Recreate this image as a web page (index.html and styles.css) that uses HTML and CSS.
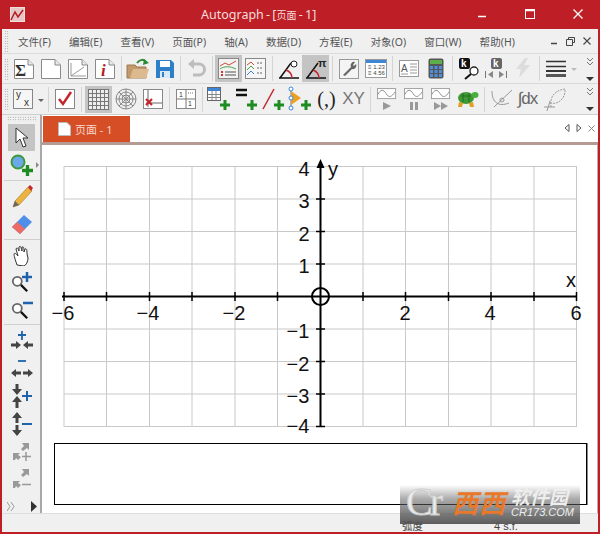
FILE: index.html
```html
<!DOCTYPE html>
<html lang="zh">
<head>
<meta charset="utf-8">
<title>Autograph</title>
<link rel="stylesheet" href="styles.css">
</head>
<body>
<svg class="defs" width="0" height="0">
  <defs>
    <symbol id="page" viewBox="0 0 22 22"><path d="M1.5 1.5H15L20.500 7V20.500H1.500Z" fill="#fff" stroke="#8a8a8a"/><path d="M15 1.500V7H20.500" fill="#e8e8e8" stroke="#8a8a8a"/></symbol>
    <symbol id="plus" viewBox="0 0 10 10"><path d="M5 0V10M0 5H10" stroke="#1d8a22" stroke-width="3"/></symbol>
    <symbol id="wave" viewBox="0 0 22 14"><rect x=".5" y=".5" width="20" height="11" fill="#fff" stroke="#9a9a9a"/><path d="M1 7C4 1 7 1 10 6S16 10 20 4" fill="none" stroke="#8a8a8a"/></symbol>
    <symbol id="mag" viewBox="0 0 20 20"><circle cx="7" cy="7" r="5" fill="#fff" stroke="#666" stroke-width="2"/><path d="M11 11L18 18" stroke="#111" stroke-width="2.500"/></symbol>
    <symbol id="chev" viewBox="0 0 10 26"><path d="M2 2L5 5L8 2M2 6L5 9L8 6" fill="none" stroke="#777"/><path d="M1 21H9L5 25Z" fill="#333"/></symbol>
    <symbol id="arr" viewBox="0 0 10 10"><path d="M0 5L5 1V3.500H10V6.500H5V9Z" fill="#444"/></symbol>
  </defs>
</svg>

<header class="titlebar">
  <svg class="app-icon" width="15" height="15" viewBox="0 0 15 15"><rect x=".5" y=".5" width="14" height="14" fill="#e8c6c6" stroke="#f3dddd"/><path d="M1 13L5 5L8 10L13 3" fill="none" stroke="#b01c22" stroke-width="1.500"/></svg>
  <div class="title">Autograph - [<span class="title-cn">页面</span> - 1]</div>
  <div class="win-btns">
    <svg width="10" height="10" viewBox="0 0 10 10"><path d="M1 7.500H9" stroke="#fff" stroke-width="1.500"/></svg>
    <svg width="10" height="10" viewBox="0 0 10 10"><rect x=".5" y=".5" width="9" height="9" fill="none" stroke="#fff"/><path d="M0 1.500H10" stroke="#fff" stroke-width="1.500"/></svg>
    <svg width="10" height="10" viewBox="0 0 10 10"><path d="M.5 .5L9.500 9.500M9.500 .5L.5 9.500" stroke="#fff" stroke-width="1.300"/></svg>
  </div>
</header>

<div class="shell">
<nav class="menubar">
  <i class="grip"></i>
  <span>文件(F)</span><span>编辑(E)</span><span>查看(V)</span><span>页面(P)</span><span>轴(A)</span><span>数据(D)</span><span>方程(E)</span><span>对象(O)</span><span>窗口(W)</span><span>帮助(H)</span>
  <div class="mdi">
    <svg width="8" height="8" viewBox="0 0 8 8"><path d="M1 6.500H7" stroke="#444" stroke-width="1.500"/></svg>
    <svg width="9" height="9" viewBox="0 0 9 9"><path d="M2.500 2.500V.5H8.500V5.500H6.500M.5 2.500H6.500V8.500H.5Z" fill="none" stroke="#444"/></svg>
    <svg width="8" height="8" viewBox="0 0 8 8"><path d="M.5 .5L7.500 7.500M7.500 .5L.5 7.500" stroke="#444" stroke-width="1.100"/></svg>
  </div>
</nav>

<div class="toolbar">
  <i class="grip"></i>
  <b class="tb"><svg width="22" height="22"><use href="#page"/><text x="2" y="18" class="ic-serif">Σ</text></svg></b>
  <b class="tb"><svg width="22" height="22"><use href="#page"/></svg></b>
  <b class="tb"><svg width="22" height="22"><use href="#page"/><path d="M4 18L17 9M4 5V18H19" fill="none" stroke="#999"/></svg></b>
  <b class="tb"><svg width="22" height="22"><use href="#page"/><text x="7" y="18" class="ic-i">i</text></svg></b>
  <u class="sep"></u>
  <b class="tb"><svg width="24" height="22" viewBox="0 0 24 22"><path d="M1 7H9L11 9H20V20H1Z" fill="#c49a6c" stroke="#9a7a52"/><path d="M4 20L7 11H23L20 20Z" fill="#dcb98e"/><path d="M11 5C14 1 18 1 20 4" fill="none" stroke="#2a8a34" stroke-width="2"/><path d="M18 1L23 5L17 7Z" fill="#2a8a34"/></svg></b>
  <b class="tb"><svg width="20" height="20" viewBox="0 0 20 20"><path d="M1 1H16L19 4V19H1Z" fill="#2d7fc9"/><rect x="5" y="2" width="10" height="6" fill="#fff"/><rect x="5" y="12" width="10" height="7" fill="#d8e8f6"/><rect x="7" y="13" width="2" height="5" fill="#2d7fc9"/></svg></b>
  <u class="sep tight"></u>
  <b class="tb"><svg width="20" height="20" viewBox="0 0 20 20"><path d="M3 5H12A5.500 5.500 0 0 1 12 16H6" fill="none" stroke="#bdbdbd" stroke-width="3"/><path d="M7 0V10L1 5Z" fill="#bdbdbd"/></svg></b>
  <u class="sep tight"></u>
  <b class="tb on"><svg width="21" height="21" viewBox="0 0 21 21"><rect x=".5" y=".5" width="20" height="20" fill="#f2f2f2" stroke="#888"/><path d="M2 8L7 5L11 7L18 3" fill="none" stroke="#d24a3a"/><path d="M2 11C6 8 12 8 18 11" fill="none" stroke="#4aa04a"/><path d="M3 14H5M3 17H5" stroke="#c33" stroke-width="2"/><path d="M7 14H18M7 17H18" stroke="#555"/></svg></b>
  <b class="tb"><svg width="21" height="21" viewBox="0 0 21 21"><rect x=".5" y=".5" width="20" height="20" fill="#f6f6f6" stroke="#888"/><path d="M2 7L6 4L9 7" fill="none" stroke="#d24a3a"/><path d="M2 12L6 8L9 11" fill="none" stroke="#4aa04a"/><path d="M2 17L6 13L9 16" fill="none" stroke="#3d7fd0"/><path d="M12 5H18M12 10H18M12 15H18" stroke="#666" stroke-dasharray="2 1"/></svg></b>
  <u class="sep"></u>
  <b class="tb"><svg width="22" height="22" viewBox="0 0 22 22"><path d="M1 20H21M2 20L13 5" fill="none" stroke="#111" stroke-width="1.500"/><path d="M8 12A9 9 0 0 1 14 20" fill="none" stroke="#c4262e" stroke-width="1.500"/><circle cx="16" cy="6" r="3" fill="#fff" stroke="#222"/></svg></b>
  <b class="tb on"><svg width="22" height="22" viewBox="0 0 22 22"><path d="M1 20H21M2 20L13 5" fill="none" stroke="#111" stroke-width="1.500"/><path d="M8 12A9 9 0 0 1 14 20" fill="none" stroke="#c4262e" stroke-width="1.500"/><text x="13" y="9" class="ic-pi">π</text></svg></b>
  <u class="sep"></u>
  <b class="tb"><svg width="20" height="20" viewBox="0 0 20 20"><rect x=".5" y=".5" width="19" height="19" fill="#f4f4f4" stroke="#999"/><path d="M4 16L12 8A3.500 3.500 0 0 1 16 3L14 6L15 7L17 5A3.500 3.500 0 0 1 13 10L6 17Z" fill="#666"/></svg></b>
  <b class="tb"><svg width="22" height="19" viewBox="0 0 22 19"><rect x=".5" y=".5" width="21" height="18" fill="#fff" stroke="#999"/><rect x="1" y="1" width="20" height="3" fill="#3d86d6"/><text x="3" y="10" class="ic-tiny">≡ 1.23</text><text x="3" y="16" class="ic-tiny">≡ 4.56</text></svg></b>
  <u class="sep"></u>
  <b class="tb"><svg width="20" height="17" viewBox="0 0 20 17"><rect x=".5" y=".5" width="19" height="16" fill="#fff" stroke="#999"/><text x="2" y="12" class="ic-a">A</text><path d="M11 4H18M11 7H18M11 10H18M11 13H18M2 14H9" stroke="#999"/></svg></b>
  <b class="tb"><svg width="16" height="21" viewBox="0 0 16 21"><rect x=".5" y=".5" width="15" height="20" rx="2" fill="#555"/><rect x="2" y="2" width="12" height="4" fill="#5bb04b"/><path d="M2 8H5V11H2ZM6.500 8H9.500V11H6.500ZM11 8H14V11H11ZM2 12H5V15H2ZM6.500 12H9.500V15H6.500ZM11 12H14V15H11ZM2 16H5V19H2ZM6.500 16H9.500V19H6.500ZM11 16H14V19H11Z" fill="#4f8edb"/></svg></b>
  <u class="sep"></u>
  <b class="tb"><svg width="22" height="22" viewBox="0 0 22 22"><rect x="1" y="0" width="11" height="11" rx="2" fill="#111"/><text x="3" y="9" class="ic-k">k</text><circle cx="16" cy="13" r="4" fill="#fff" stroke="#222" stroke-width="1.300"/><path d="M13 16L7 21" stroke="#111" stroke-width="2"/></svg></b>
  <b class="tb"><svg width="22" height="21" viewBox="0 0 22 21"><rect x="6" y="0" width="11" height="11" rx="2" fill="#666"/><text x="8" y="9" class="ic-k">k</text><path d="M.5 13V20M21.500 13V20" stroke="#777"/><path d="M3 16.500L8 13V20ZM19 16.500L14 13V20Z" fill="#888"/></svg></b>
  <b class="tb"><svg width="16" height="21" viewBox="0 0 16 21"><path d="M10 0L1 11H6L4 20L15 7H9L13 0Z" fill="#dcdcdc"/></svg></b>
  <u class="sep"></u>
  <b class="tb"><svg width="20" height="17" viewBox="0 0 20 17"><path d="M0 1.500H20M0 6.500H20" stroke="#333" stroke-width="1.500"/><path d="M0 11H20" stroke="#333" stroke-width="2"/><path d="M0 15.500H20" stroke="#555" stroke-width="3"/></svg></b>
  <b class="drop gray"></b>
  <svg class="chev" width="10" height="26"><use href="#chev"/></svg>
</div>

<div class="toolbar second">
  <i class="grip"></i>
  <b class="tb narrow"><svg width="20" height="20" viewBox="0 0 20 20"><rect x=".5" y=".5" width="19" height="19" fill="#f6f6f6" stroke="#888"/><text x="3" y="9" class="ic-yx">y</text><text x="11" y="17" class="ic-yx">x</text></svg></b>
  <b class="drop"></b>
  <u class="sep"></u>
  <b class="tb"><svg width="20" height="20" viewBox="0 0 20 20"><rect x=".5" y=".5" width="19" height="19" fill="#fff" stroke="#888"/><path d="M4 10L8 15L16 3" fill="none" stroke="#c4262e" stroke-width="2.500"/></svg></b>
  <u class="sep wide"></u>
  <b class="tb on"><svg width="21" height="21" viewBox="0 0 21 21"><rect x=".5" y=".5" width="20" height="20" fill="#eee" stroke="#777"/><path d="M4.500 1V20M8.500 1V20M12.500 1V20M16.500 1V20M1 4.500H20M1 8.500H20M1 12.500H20M1 16.500H20" stroke="#777"/></svg></b>
  <b class="tb"><svg width="22" height="22" viewBox="0 0 22 22" fill="none" stroke="#888"><circle cx="11" cy="11" r="10"/><circle cx="11" cy="11" r="7"/><circle cx="11" cy="11" r="4"/><path d="M1 11H21M11 1V21M4 4L18 18M18 4L4 18"/></svg></b>
  <b class="tb"><svg width="20" height="20" viewBox="0 0 20 20"><rect x=".5" y=".5" width="19" height="19" fill="#fff" stroke="#888"/><path d="M5 1V18M3 14H19" stroke="#666"/><path d="M3 10L9 16M9 10L3 16" stroke="#c4262e" stroke-width="2.200"/></svg></b>
  <u class="sep"></u>
  <b class="tb"><svg width="20" height="20" viewBox="0 0 20 20"><rect x=".5" y=".5" width="19" height="19" fill="#fff" stroke="#888"/><path d="M1 10H19M10 1V19" stroke="#777"/><text x="3" y="8" class="ic-tiny2">1</text><text x="12" y="17" class="ic-tiny2">1</text><path d="M12 4H18" stroke="#777" stroke-dasharray="1 1"/></svg></b>
  <u class="sep"></u>
  <b class="tb"><svg width="24" height="24" viewBox="0 0 24 24"><rect x=".5" y=".5" width="13" height="13" fill="#fff" stroke="#666"/><rect x="1" y="1" width="12" height="3" fill="#3d86d6"/><path d="M1 7.500H13M1 10.500H13M5 4V13M9 4V13" stroke="#888"/><use href="#plus" x="13" y="13" width="10" height="10"/></svg></b>
  <b class="tb"><svg width="24" height="24" viewBox="0 0 24 24"><path d="M2 3H13M2 8H13" stroke="#111" stroke-width="2.500"/><use href="#plus" x="13" y="13" width="10" height="10"/></svg></b>
  <b class="tb"><svg width="24" height="24" viewBox="0 0 24 24"><path d="M2 22L13 2" stroke="#c4262e" stroke-width="1.500"/><use href="#plus" x="13" y="13" width="10" height="10"/></svg></b>
  <b class="tb"><svg width="24" height="26" viewBox="0 0 24 26"><path d="M3 3L3 23" stroke="#3d86d6"/><path d="M3 5L13 12L3 19Z" fill="#f0a020"/><circle cx="3" cy="3" r="2" fill="#fff" stroke="#3d86d6"/><circle cx="3" cy="12" r="2" fill="#fff" stroke="#3d86d6"/><circle cx="3" cy="22" r="2" fill="#fff" stroke="#3d86d6"/><use href="#plus" x="13" y="14" width="10" height="10"/></svg></b>
  <b class="tb glyph paren">(,)</b>
  <b class="tb glyph xy">XY</b>
  <u class="sep"></u>
  <b class="tb"><svg width="20" height="22" viewBox="0 0 20 22"><use href="#wave" width="20" height="13"/><path d="M6 14L14 18L6 22Z" fill="#999"/></svg></b>
  <b class="tb"><svg width="20" height="22" viewBox="0 0 20 22"><use href="#wave" width="20" height="13"/><path d="M6 14H9V22H6ZM11 14H14V22H11Z" fill="#999"/></svg></b>
  <b class="tb"><svg width="20" height="22" viewBox="0 0 20 22"><use href="#wave" width="20" height="13"/><path d="M3 14L10 18L3 22ZM10 14L17 18L10 22Z" fill="#999"/></svg></b>
  <b class="tb"><svg width="23" height="18" viewBox="0 0 23 18"><ellipse cx="10" cy="8" rx="8" ry="6" fill="#3f9a36"/><path d="M3 12L2 17H6L7 13ZM13 13L14 17H18L17 12Z" fill="#e2a020"/><ellipse cx="19" cy="5" rx="3.500" ry="3" fill="#4dae40"/><path d="M5 6H15M7 3V12M13 3V12" stroke="#1f6d1c"/></svg></b>
  <u class="sep"></u>
  <b class="tb"><svg width="24" height="24" viewBox="0 0 24 24" fill="none" stroke="#999"><path d="M3 4C3 16 10 20 20 16M5 20L23 3"/><circle cx="13" cy="13" r="2"/></svg></b>
  <b class="tb glyph idx">∫dx</b>
  <b class="tb"><svg width="24" height="24" viewBox="0 0 24 24" fill="none" stroke="#999"><path d="M8 20C6 8 14 3 22 2C23 10 16 18 8 16" stroke-dasharray="2 1"/><path d="M1 20H12M7 14L4 24"/></svg></b>
  <svg class="chev" width="10" height="26"><use href="#chev"/></svg>
</div>

<div class="workspace">
  <aside class="sidebar">
    <i class="hgrip"></i>
    <b class="sb on"><svg width="14" height="21" viewBox="0 0 14 21"><path d="M1 1V16L5 12L8 20L11 19L8 11H13Z" fill="#fff" stroke="#333"/></svg></b>
    <b class="sb"><svg width="24" height="22" viewBox="0 0 24 22"><circle cx="8" cy="8" r="6.500" fill="#6aa8ea" stroke="#3c9a3c" stroke-width="2"/><use href="#plus" x="12" y="11" width="11" height="11"/></svg><em class="more"></em></b>
    <hr class="hsep roomy">
    <b class="sb"><svg width="22" height="24" viewBox="0 0 22 24"><path d="M2 22L4 16L17 2L21 6L8 20Z" fill="#eeb23e" stroke="#9a7a30" stroke-width=".6"/><path d="M17 2L19 0L22 3L20 6Z" fill="#c4262e"/><path d="M2 22L4 16L8 20Z" fill="#666"/></svg></b>
    <b class="sb"><svg width="22" height="22" viewBox="0 0 22 22"><path d="M1 14L13 2L21 9L9 21Z" fill="#4f8fea"/><path d="M1 14L6 9L14 16L9 21Z" fill="#ee6a62"/></svg></b>
    <hr class="hsep roomy">
    <b class="sb"><svg width="18" height="21" viewBox="0 0 18 21"><path d="M4 20C2 14 1 11 1 9C2 7 4 10 5 11L3 4C4 2 5 3 6 6L6 2C8 0 8 3 9 6V2C11 1 11 4 11 7L12 4C14 3 14 6 14 9L15 13C15 17 13 20 11 21Z" fill="#fff" stroke="#333"/></svg></b>
    <b class="sb"><svg width="22" height="22" viewBox="0 0 22 22"><use href="#mag" y="3" width="18" height="18"/><path d="M16 0V10M11 5H21" stroke="#1f63ad" stroke-width="2.500"/></svg></b>
    <b class="sb"><svg width="22" height="22" viewBox="0 0 22 22"><use href="#mag" y="3" width="18" height="18"/><path d="M12 4H22" stroke="#1f63ad" stroke-width="2.500"/></svg></b>
    <hr class="hsep">
    <b class="sb tall"><svg width="22" height="20" viewBox="0 0 22 20"><path d="M11 1V10M7 5H15" stroke="#1f63ad" stroke-width="1.800"/><use href="#arr" x="12" y="10" width="10" height="10"/><use href="#arr" x="-10" y="10" width="10" height="10" transform="scale(-1 1)"/></svg></b>
    <b class="sb tall"><svg width="22" height="20" viewBox="0 0 22 20"><path d="M7 3H15" stroke="#1f63ad" stroke-width="1.800"/><use href="#arr" x="0" y="10" width="10" height="10"/><use href="#arr" x="-22" y="10" width="10" height="10" transform="scale(-1 1)"/></svg></b>
    <b class="sb tall"><svg width="22" height="24" viewBox="0 0 22 24"><path d="M4.500 0H7.500V6H4.500ZM1 5H11L6 11Z" fill="#444"/><path d="M1 18L6 12L11 18ZM4.500 17H7.500V24H4.500Z" fill="#444"/><path d="M11 12H21M16 7V17" stroke="#1f63ad" stroke-width="2"/></svg></b>
    <b class="sb"><svg width="22" height="24" viewBox="0 0 22 24"><path d="M1 6L6 0L11 6ZM4.500 5H7.500V11H4.500ZM4.500 13H7.500V19H4.500ZM1 18H11L6 24Z" fill="#444"/><path d="M11 12H21" stroke="#1f63ad" stroke-width="2"/></svg></b>
    <b class="sb tall"><svg width="20" height="20" viewBox="0 0 20 20" fill="#999"><path d="M10 2H17V9L15 7L11 10L9 8L12 5ZM1 19V12H8L6 14L9 16L6 19L4 17L3 19Z"/><path d="M14 11V20M10 15.500H19" stroke="#999" stroke-width="1.500"/></svg></b>
    <b class="sb"><svg width="20" height="20" viewBox="0 0 20 20" fill="#999"><path d="M10 0H17V7L15 5L11 8L9 6L12 3ZM1 19V12H8L6 14L9 16L6 19L4 17L3 19Z"/><path d="M10 15.500H19" stroke="#999" stroke-width="1.500"/></svg></b>
    <div class="sb-foot"><svg width="8" height="9" viewBox="0 0 8 9"><path d="M0 0L3 4.500L0 9M4 0L7 4.500L4 9" fill="none" stroke="#999"/></svg><svg width="6" height="11" viewBox="0 0 6 11"><path d="M0 0L6 5.500L0 11Z" fill="#333"/></svg></div>
  </aside>

  <main class="content">
    <div class="tabrow">
      <div class="tab"><svg width="13" height="14" viewBox="0 0 13 14"><path d="M.5 .5H9L12.500 4V13.500H.5Z" fill="#fff" stroke="#bbb"/></svg><span>页面 - 1</span></div>
      <div class="tabctl">
        <svg width="6" height="8" viewBox="0 0 6 8"><path d="M5 .5V7.500L1 4Z" fill="#fff" stroke="#555"/></svg>
        <svg width="6" height="8" viewBox="0 0 6 8"><path d="M1 .5V7.500L5 4Z" fill="#fff" stroke="#555"/></svg>
        <svg width="7" height="7" viewBox="0 0 7 7"><path d="M.5 .5L6.500 6.500M6.500 .5L.5 6.500" stroke="#888"/></svg>
      </div>
    </div>
    <div class="doc">
      <svg class="graph" width="555" height="296" viewBox="42 145 555 296">
        <g class="grid">
          <path d="M64 166.500H576M64 199H576M64 231.500H576M64 264H576M64 329H576M64 361.500H576M64 394H576M64 426.500H576"/>
          <path d="M64 166V427M106.500 166V427M149.500 166V427M192 166V427M235 166V427M277.500 166V427M363 166V427M405.500 166V427M448.500 166V427M491 166V427M534 166V427M576.500 166V427"/>
        </g>
        <g class="axes">
          <path d="M62 296.500H577M320.500 166V427"/>
          <path class="ticks" d="M64 292V301M106.500 292V301M149.500 292V301M192 292V301M235 292V301M277.500 292V301M363 292V301M405.500 292V301M448.500 292V301M491 292V301M534 292V301M576.500 292V301M316 199H325M316 231.500H325M316 264H325M316 329H325M316 361.500H325M316 394H325M316 426.500H325"/>
          <path class="tip" d="M320.500 159L316.500 168H324.500Z"/>
          <circle class="origin" cx="320.500" cy="296.500" r="8.500"/>
        </g>
        <g class="nums">
          <text x="304" y="176">4</text><text x="304" y="208">3</text><text x="304" y="241">2</text><text x="304" y="273">1</text>
          <text x="298" y="338">−1</text><text x="298" y="371">−2</text><text x="298" y="403">−3</text><text x="298" y="433">−4</text>
          <text x="63" y="320">−6</text><text x="148" y="320">−4</text><text x="234" y="320">−2</text><text x="405" y="320">2</text><text x="490" y="320">4</text><text x="576" y="320">6</text>
          <text x="571" y="287">x</text><text x="333" y="176">y</text>
        </g>
      </svg>
      <div class="textbox"></div>
    </div>
  </main>
</div>

<footer class="status">
  <span class="st-a">弧度</span>
  <span class="st-b">4 s.f.</span>
</footer>
</div>

<div class="watermark">
  <span class="wm-c">Cr</span>
  <span class="wm-x"><span>西</span><span>西</span></span>
  <span class="wm-r"><span class="wm-cn">软件园</span><span class="wm-en">CR173.COM</span></span>
</div>
</body>
</html>
```
FILE: styles.css
```css
* { box-sizing: border-box; }
html, body { margin: 0; padding: 0; }
body {
  position: relative;
  width: 600px;
  height: 534px;
  overflow: hidden;
  display: flex;
  flex-direction: column;
  background: #be1e25;
  font-family: "Noto Sans", "Noto Sans CJK SC", sans-serif;
  color: #444;
}
.defs { position: absolute; }
svg { display: block; flex: none; }
b, u, i, em { font-weight: normal; font-style: normal; text-decoration: none; }

.titlebar { height: 29px; flex: none; display: flex; align-items: center; position: relative; }
.app-icon { margin-left: 10px; }
.title { position: absolute; left: 201px; top: 6px; font-size: 12.500px; line-height: 18px; color: #f4dcdc; white-space: nowrap; word-spacing: -1px; }
.title-cn { font-size: 10px; }
.win-btns { margin-left: auto; display: flex; gap: 38px; margin-right: 17px; align-items: center; margin-top: -1px; }

.shell { flex: 1; min-height: 0; margin: 0 2px 2px 2px; background: #f0f0f0; display: flex; flex-direction: column; }

.grip {
  width: 5px; height: 22px; flex: none; margin: 0 1px 0 2px;
  background-image: radial-gradient(circle, #8c8c8c 0.7px, transparent 0.8px);
  background-size: 2.500px 2.500px;
}
.menubar { height: 25px; flex: none; display: flex; align-items: center; font-size: 10.500px; color: #555; border-bottom: 1px solid #dcdcdc; }
.menubar .grip { margin-right: 9px; }
.menubar span { margin-right: 18px; white-space: nowrap; letter-spacing: .05px; }
.mdi { margin-left: auto; display: flex; align-items: center; gap: 8px; margin-right: 7px; }

.toolbar { height: 30px; flex: none; display: flex; align-items: center; border-bottom: 1px solid #d8d8d8; position: relative; }
.toolbar.second { height: 31px; border-bottom: 1px solid #cfcfcf; }
.tb { width: 27px; height: 27px; flex: none; display: flex; align-items: center; justify-content: center; }
.tb.narrow { width: 26px; }
.tb.on, .sb.on { background: #c4c4c4; }
.sep { width: 1px; height: 25px; flex: none; background: #d4d4d4; margin: 0 2px 0 3px; }
.sep.tight { margin: 0 2px; }
.sep.wide { margin: 0 3px; }
.drop { width: 9px; height: 27px; flex: none; position: relative; }
.drop::after { content: ""; position: absolute; left: 2px; top: 13px; border: 3px solid transparent; border-top-color: #666; border-bottom: 0; }
.drop.gray::after { border-top-color: #bbb; }
.chev { position: absolute; right: 3px; top: 2px; }
.glyph { color: #555; white-space: nowrap; }
.paren { font-family: "Liberation Serif", serif; font-size: 20px; color: #222; }
.xy { font-family: "Liberation Sans", sans-serif; font-size: 17px; color: #777; }
.idx { font-family: "Liberation Sans", sans-serif; font-size: 17px; color: #666; letter-spacing: -1px; }

.ic-serif { font: bold 17px "Liberation Serif", serif; fill: #333; }
.ic-i { font: italic bold 17px "Liberation Serif", serif; fill: #b01c22; }
.ic-pi { font: bold 11px "Liberation Sans", sans-serif; fill: #222; }
.ic-tiny { font: 6px "Liberation Sans", sans-serif; fill: #444; }
.ic-tiny2 { font: 7px "Liberation Sans", sans-serif; fill: #333; }
.ic-a { font: 10px "Liberation Sans", sans-serif; fill: #555; }
.ic-k { font: bold 10px "Liberation Sans", sans-serif; fill: #fff; }
.ic-yx { font: 10px "Liberation Sans", sans-serif; fill: #333; }

.workspace { flex: 1; min-height: 0; display: flex; }
.sidebar { width: 39px; flex: none; height: 399px; margin-left: 1px; display: flex; flex-direction: column; align-items: center; border-right: 2px solid #a8a8a8; border-bottom: 1px solid #c4c4c4; background: #f0f0f0; padding-top: 1px; }
.hgrip { width: 30px; height: 6px; flex: none; background-image: radial-gradient(circle, #8c8c8c 0.7px, transparent 0.8px); background-size: 2.500px 2.500px; margin-bottom: 2px; }
.sb { width: 27px; height: 27px; flex: none; display: flex; align-items: center; justify-content: center; position: relative; }
.sb.tall { height: 28px; }
.more { position: absolute; right: -4px; top: 11px; border: 3px solid transparent; border-left-color: #888; border-right: 0; }
.hsep { width: 36px; height: 1px; margin: 1px 0; border: 0; background: #d0d0d0; flex: none; }
.hsep.roomy { margin: 2px 0; }
.sb-foot { margin-top: auto; margin-bottom: 1px; width: 30px; display: flex; justify-content: space-between; align-items: center; }

.content { flex: 1; min-width: 0; display: flex; flex-direction: column; }
.tabrow { height: 30px; flex: none; display: flex; background: #fff; border-bottom: 3px solid #b89a94; padding-left: 1px; padding-top: 1px; }
.tab { width: 87px; height: 26px; background: #d64e26; color: #f6d8cc; display: flex; align-items: center; gap: 4px; padding-left: 15px; font-size: 11px; white-space: nowrap; }
.tabctl { margin-left: auto; display: flex; align-items: center; gap: 6px; height: 24px; margin-right: 3px; }
.doc { flex: 1; min-height: 0; background: #fff; display: flex; flex-direction: column; border-right: 1px solid #c9a3a3; }
.graph { flex: none; }
.grid path { fill: none; stroke: #c9c9c9; stroke-width: 1; }
.axes path { fill: none; stroke: #000; stroke-width: 2; }
.axes .ticks { stroke-width: 1.500; }
.axes .tip { fill: #000; stroke: none; }
.origin { fill: none; stroke: #000; stroke-width: 2; }
.nums text { font: 20px "Liberation Sans", sans-serif; fill: #111; text-anchor: middle; }
.textbox { width: 533px; height: 62px; margin: 2px 0 0 12px; flex: none; background: #fff; border: 1px solid #000; box-shadow: 1px 0 0 #888; }

.status { height: 19px; flex: none; display: flex; align-items: center; padding-top: 5px; font-size: 10.500px; color: #444; border-top: 1px solid #dedede; margin-top: -1px; position: relative; }
.st-a { margin-left: 400px; }
.st-b { margin-left: 71px; font-family: "Liberation Sans", sans-serif; font-size: 11px; }

.watermark {
  position: absolute; left: 400px; top: 485px; width: 180px; height: 39px; padding-bottom: 5px;
  background: linear-gradient(to bottom, rgba(90,90,90,0), rgba(90,90,90,.5) 35%, rgba(85,85,85,.95));
  display: flex; align-items: center;
}
.wm-c { font: 40px/34px "Liberation Serif", serif; color: #eee; margin-left: 6px; letter-spacing: -3px; width: 46px; flex: none; -webkit-text-stroke: 1px #ccc; }
.wm-x { display: flex; gap: 1px; font: italic bold 26px/30px "Noto Sans CJK SC", sans-serif; color: #e8782a; flex: none; margin-right: 6px; }
.wm-r { display: flex; flex-direction: column; color: #eee; flex: none; }
.wm-cn { font: italic bold 19px/20px "Noto Sans CJK SC", sans-serif; }
.wm-en { font: italic 11px/12px "Liberation Sans", sans-serif; }
```
